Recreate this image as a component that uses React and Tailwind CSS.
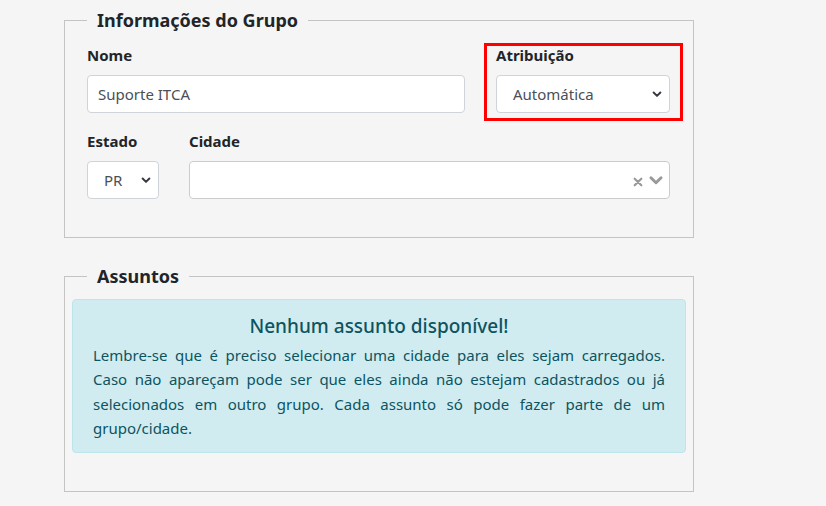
import React from 'react';

const font = { fontFamily: '"Noto Sans", "Open Sans", sans-serif' };

const Chevron = ({ className }) => (
    <svg viewBox="0 0 16 16" className={className} fill="none" stroke="currentColor" strokeWidth="2.6" strokeLinecap="round" strokeLinejoin="round">
        <path d="M3.5 6l4.5 4.5L12.5 6" />
    </svg>
);

const Fieldset = ({ title, className, children }) => (
    <fieldset className={`border border-[#c4c4c4] mx-[64px] w-[630px] ${className}`}>
        <legend className="ml-[22px] px-[10px] text-[18px] font-bold text-[#212529] leading-[26px]">{title}</legend>
        {children}
    </fieldset>
);

const SelectBox = ({ value, className, textClass }) => (
    <div className={`h-[38px] bg-white border border-[#ced4da] rounded-[4px] flex items-center ${className}`}>
        <span className={`flex-1 text-[15px] text-[#495057] ${textClass}`}>{value}</span>
        <Chevron className="w-[12px] h-[12px] text-[#343a40] mr-[6px]" />
    </div>
);

export default function App() {
    return (
        <div className="min-h-[506px] w-[826px] bg-[#f5f5f5] pt-[7px] pb-[14px]" style={font}>
            <Fieldset title="Informações do Grupo" className="pb-[38px]">
                <div className="px-[22px] pt-[11px]">
                    <div className="flex gap-[31px]">
                        <div className="w-[378px]">
                            <div className="text-[15px] font-bold text-[#212529] leading-[22px] mb-[9px]">Nome</div>
                            <div className="h-[38px] bg-white border border-[#ced4da] rounded-[4px] flex items-center px-[10px] text-[15px] text-[#495057]">
                                Suporte ITCA
                            </div>
                        </div>
                        <div className="relative w-[174px]">
                            <div className="absolute -left-[12px] -right-[13px] -top-[1px] -bottom-[8px] border-[3px] border-[#ff0000] pointer-events-none"></div>
                            <div className="text-[15px] font-bold text-[#212529] leading-[22px] mb-[9px]">Atribuição</div>
                            <SelectBox value="Automática" textClass="pl-[16px]" />
                        </div>
                    </div>
                    <div className="flex gap-[30px] mt-[17px]">
                        <div className="w-[72px]">
                            <div className="text-[15px] font-bold text-[#212529] leading-[22px] mb-[9px]">Estado</div>
                            <SelectBox value="PR" textClass="pl-[16px]" />
                        </div>
                        <div className="w-[481px]">
                            <div className="text-[15px] font-bold text-[#212529] leading-[22px] mb-[9px]">Cidade</div>
                            <div className="h-[38px] bg-white border border-[#cccccc] rounded-[4px] flex items-center justify-end pr-[4px] gap-[4px] text-[#999999]">
                                <svg viewBox="0 0 12 12" className="w-[10px] h-[10px] mt-[3px]" stroke="currentColor" strokeWidth="2.6" strokeLinecap="round">
                                    <path d="M2 2l8 8M10 2l-8 8" />
                                </svg>
                                <Chevron className="w-[18px] h-[18px]" />
                            </div>
                        </div>
                    </div>
                </div>
            </Fieldset>

            <Fieldset title="Assuntos" className="mt-[25px] pb-[38px]">
                <div className="mx-[7px] mt-[10px] bg-[#d1ecf1] border border-[#bee5eb] rounded-[4px] text-[#0c5460] px-[20px] pt-[13px] pb-[12px]">
                    <div className="text-center text-[19px] font-medium leading-[26px] mb-[4px]">Nenhum assunto disponível!</div>
                    <p className="text-[15px] leading-[24.3px] text-justify">
                        Lembre-se que é preciso selecionar uma cidade para eles sejam carregados. Caso não apareçam pode ser que eles ainda não estejam cadastrados ou já selecionados em outro grupo. Cada assunto só pode fazer parte de um grupo/cidade.
                    </p>
                </div>
            </Fieldset>
        </div>
    );
}
